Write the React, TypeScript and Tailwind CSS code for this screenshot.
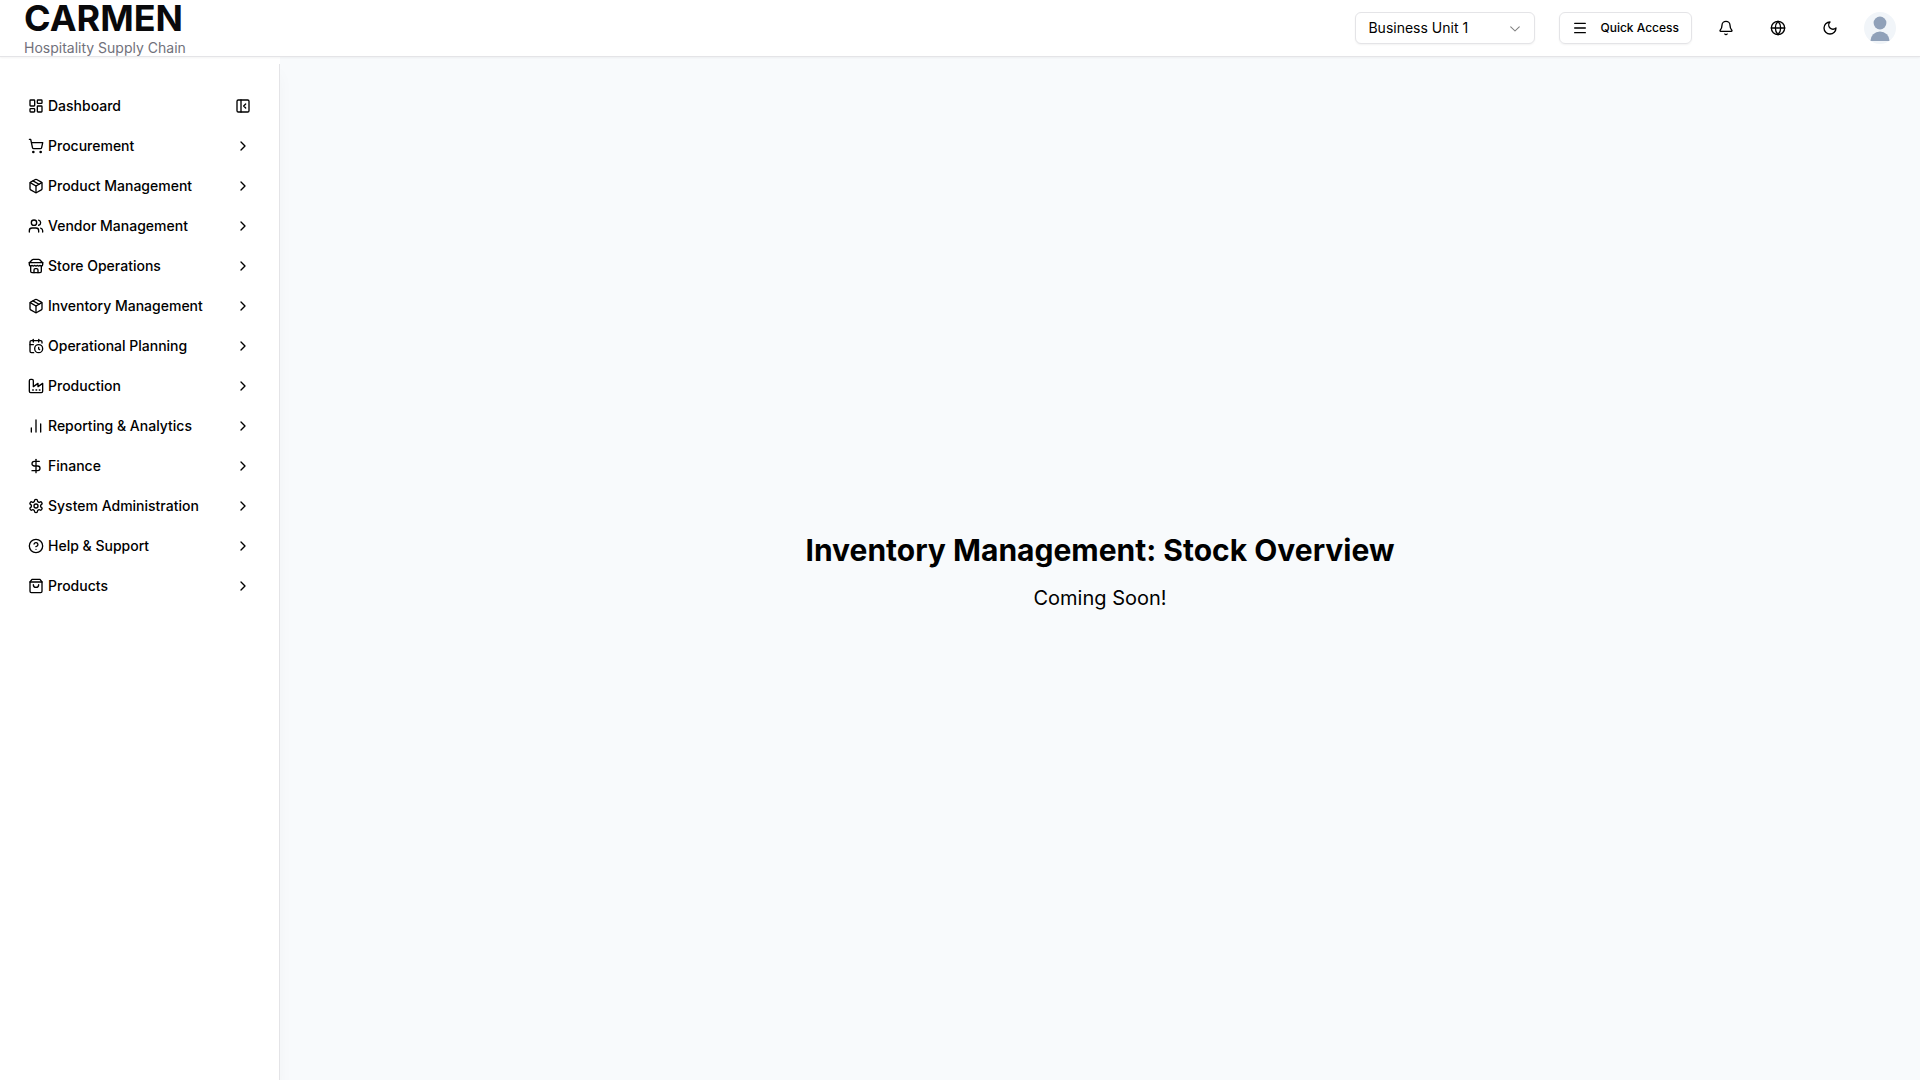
import type { ReactNode } from "react";
import {
  LayoutDashboard, ShoppingCart, Package, Users, ChartNoAxesColumn,
  DollarSign, CircleHelp, ChevronRight, PanelLeftClose, Menu, Bell, Globe,
} from "lucide-react";

function Icon({ children }: { children: ReactNode }) {
  return (
    <svg viewBox="0 0 24 24" className="size-4 shrink-0 fill-none stroke-current stroke-2" strokeLinecap="round" strokeLinejoin="round" aria-hidden="true">
      {children}
    </svg>
  );
}

const StoreIcon = () => (
  <Icon>
    <path d="m2 7 4.41-4.41A2 2 0 0 1 7.83 2h8.34a2 2 0 0 1 1.42.59L22 7" />
    <path d="M4 12v8a2 2 0 0 0 2 2h12a2 2 0 0 0 2-2v-8" />
    <path d="M15 22v-4a2 2 0 0 0-2-2h-2a2 2 0 0 0-2 2v4" />
    <path d="M2 7h20" />
    <path d="M22 7v3a2 2 0 0 1-2 2a2.7 2.7 0 0 1-1.59-.63.7.7 0 0 0-.82 0A2.7 2.7 0 0 1 16 12a2.7 2.7 0 0 1-1.59-.63.7.7 0 0 0-.82 0A2.7 2.7 0 0 1 12 12a2.7 2.7 0 0 1-1.59-.63.7.7 0 0 0-.82 0A2.7 2.7 0 0 1 8 12a2.7 2.7 0 0 1-1.59-.63.7.7 0 0 0-.82 0A2.7 2.7 0 0 1 4 12a2 2 0 0 1-2-2V7" />
  </Icon>
);

const PlanningIcon = () => (
  <Icon>
    <path d="M21 7.5V6a2 2 0 0 0-2-2H5a2 2 0 0 0-2 2v14a2 2 0 0 0 2 2h3.5" />
    <path d="M16 2v4" />
    <path d="M8 2v4" />
    <path d="M3 10h5" />
    <path d="M17.5 17.5 16 16.3V14" />
    <circle cx="16" cy="16" r="6" />
  </Icon>
);

const FactoryIcon = () => (
  <Icon>
    <path d="M2 20a2 2 0 0 0 2 2h16a2 2 0 0 0 2-2V8l-7 5V8l-7 5V4a2 2 0 0 0-2-2H4a2 2 0 0 0-2 2Z" />
    <path d="M17 18h1" />
    <path d="M12 18h1" />
    <path d="M7 18h1" />
  </Icon>
);

const SettingsIcon = () => (
  <Icon>
    <path d="M12.22 2h-.44a2 2 0 0 0-2 2v.18a2 2 0 0 1-1 1.73l-.43.25a2 2 0 0 1-2 0l-.15-.08a2 2 0 0 0-2.73.73l-.22.38a2 2 0 0 0 .73 2.73l.15.1a2 2 0 0 1 1 1.72v.51a2 2 0 0 1-1 1.74l-.15.09a2 2 0 0 0-.73 2.73l.22.38a2 2 0 0 0 2.73.73l.15-.08a2 2 0 0 1 2 0l.43.25a2 2 0 0 1 1 1.73V20a2 2 0 0 0 2 2h.44a2 2 0 0 0 2-2v-.18a2 2 0 0 1 1-1.73l.43-.25a2 2 0 0 1 2 0l.15.08a2 2 0 0 0 2.73-.73l.22-.39a2 2 0 0 0-.73-2.73l-.15-.08a2 2 0 0 1-1-1.74v-.5a2 2 0 0 1 1-1.74l.15-.09a2 2 0 0 0 .73-2.73l-.22-.38a2 2 0 0 0-2.73-.73l-.15.08a2 2 0 0 1-2 0l-.43-.25a2 2 0 0 1-1-1.73V4a2 2 0 0 0-2-2z" />
    <circle cx="12" cy="12" r="3" />
  </Icon>
);

const BagIcon = () => (
  <Icon>
    <path d="M6 2 3 6v14a2 2 0 0 0 2 2h14a2 2 0 0 0 2-2V6l-3-4Z" />
    <path d="M3 6h18" />
    <path d="M16 10a4 4 0 0 1-8 0" />
  </Icon>
);

const MoonIcon = () => (
  <Icon>
    <path d="M12 3a6 6 0 0 0 9 9 9 9 0 1 1-9-9Z" />
  </Icon>
);

const items = [
  { label: "Procurement", icon: <ShoppingCart className="size-4" /> },
  { label: "Product Management", icon: <Package className="size-4" /> },
  { label: "Vendor Management", icon: <Users className="size-4" /> },
  { label: "Store Operations", icon: <StoreIcon /> },
  { label: "Inventory Management", icon: <Package className="size-4" /> },
  { label: "Operational Planning", icon: <PlanningIcon /> },
  { label: "Production", icon: <FactoryIcon /> },
  { label: "Reporting & Analytics", icon: <ChartNoAxesColumn className="size-4" /> },
  { label: "Finance", icon: <DollarSign className="size-4" /> },
  { label: "System Administration", icon: <SettingsIcon /> },
  { label: "Help & Support", icon: <CircleHelp className="size-4" /> },
  { label: "Products", icon: <BagIcon /> },
];

export default function App() {
  return (
    <div className="flex h-screen flex-col bg-white font-['Inter',sans-serif] text-black">
      <header className="z-20 flex h-[57px] shrink-0 items-center justify-between border-b border-zinc-200 bg-white px-6 shadow-xs">
        <a href="#" className="flex flex-col gap-0.5 self-start">
          <span className="text-4xl leading-9 font-bold text-zinc-950">CARMEN</span>
          <span className="text-sm leading-5 text-zinc-500">Hospitality Supply Chain</span>
        </a>
        <div className="flex items-center">
          <div className="relative mr-6">
            <select aria-label="Business unit" className="h-8 w-[180px] appearance-none rounded-md border border-zinc-200 bg-white px-3 text-sm shadow-xs">
              <option>Business Unit 1</option>
            </select>
            <svg viewBox="0 0 15 15" className="pointer-events-none absolute top-2 right-3 size-4 fill-current opacity-50" aria-hidden="true">
              <path d="M3.135 6.158a.5.5 0 0 1 .707-.023L7.5 9.565l3.658-3.43a.5.5 0 0 1 .684.73l-4 3.75a.5.5 0 0 1-.684 0l-4-3.75a.5.5 0 0 1-.023-.707Z" />
            </svg>
          </div>
          <button className="mr-4 flex h-8 items-center gap-3 rounded-md border border-zinc-200 px-3 text-xs font-medium shadow-xs">
            <Menu className="size-4" />
            Quick Access
          </button>
          <div className="flex items-center gap-4">
            <button aria-label="Notifications" className="flex size-9 items-center justify-center"><Bell className="size-4" /></button>
            <button aria-label="Language" className="flex size-9 items-center justify-center"><Globe className="size-4" /></button>
            <button aria-label="Theme" className="flex size-9 items-center justify-center"><MoonIcon /></button>
            <button aria-label="Account" className="size-8 overflow-hidden rounded-full bg-slate-100">
              <svg viewBox="0 0 32 32" className="size-8 fill-slate-400" aria-hidden="true">
                <circle cx="16" cy="11" r="6.4" />
                <path d="M6.4 29a9.6 9.6 0 0 1 19.2 0z" />
              </svg>
            </button>
          </div>
        </div>
      </header>
      <div className="flex min-h-0 flex-1">
        <div className="z-10 flex w-[280px] shrink-0 flex-col bg-white pt-[7px]">
          <aside className="flex-1 border-r border-zinc-200 bg-white px-5 pt-[22px] shadow-[0_10px_15px_rgba(0,0,0,0.03)]">
            <nav className="flex flex-col text-sm font-medium">
              <div className="flex h-10 items-center justify-between px-2">
                <a href="#" className="flex items-center gap-1"><LayoutDashboard className="size-4" />Dashboard</a>
                <button aria-label="Collapse sidebar"><PanelLeftClose className="size-4" /></button>
              </div>
              {items.map(({ label, icon }) => (
                <button key={label} className="flex h-10 items-center gap-1 px-2">
                  {icon}
                  <span>{label}</span>
                  <ChevronRight className="ml-auto size-4" />
                </button>
              ))}
            </nav>
          </aside>
        </div>
        <main className="flex flex-1 flex-col items-center justify-center gap-4 bg-slate-50 pt-1.5">
          <h1 className="text-3xl font-bold">Inventory Management: Stock Overview</h1>
          <p className="text-xl">Coming Soon!</p>
        </main>
      </div>
    </div>
  );
}
